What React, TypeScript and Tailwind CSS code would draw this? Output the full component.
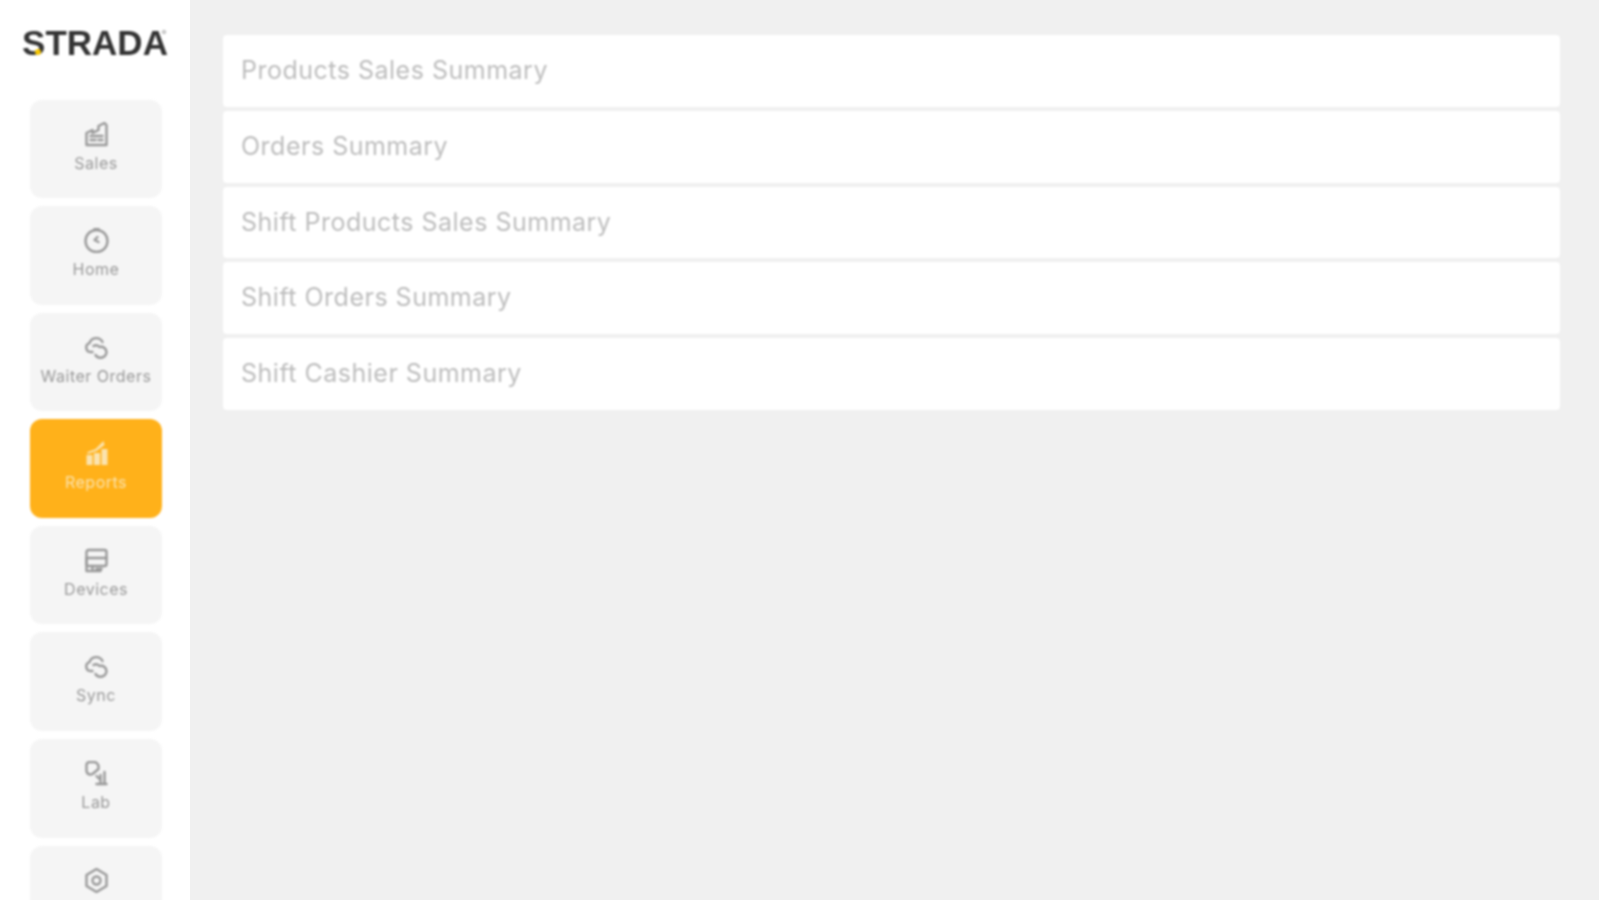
import { ReactNode } from 'react';

const stroke = {
  fill: 'none',
  stroke: 'currentColor',
  strokeWidth: 2.4,
  strokeLinecap: 'round' as const,
  strokeLinejoin: 'round' as const,
};

const icons: Record<string, ReactNode> = {
  sales: (
    <g {...stroke}>
      <path d="M2 23V11l6-3v3l6-3V4l6-3 2 2v20z" />
      <path d="M6 18h5M14 18h4M6 14h12" />
    </g>
  ),
  home: (
    <g {...stroke}>
      <circle cx="12" cy="13" r="11" />
      <path d="M13 9l-3 3 4 2" />
      <path d="M10 1h4" />
    </g>
  ),
  cloud: (
    <g {...stroke}>
      <path d="M8 17H6a4.5 4.5 0 0 1-1-8.8A7 7 0 0 1 18 7" />
      <path d="M9 11c3-2 5 0 6 1 4-1 7 2 7 5a6 6 0 0 1-11 3" />
    </g>
  ),
  reports: (
    <g fill="currentColor">
      <path d="M2 14h6v10H2zM9.5 12h6v12h-6zM17 8h6v16h-6z" />
      <path d="M3 11l8-3 8-8 1 4-8 6-9 3z" />
    </g>
  ),
  devices: (
    <g {...stroke}>
      <rect x="2" y="2" width="20" height="16" rx="2" />
      <path d="M2 10h20M2 10v13h6M8 18v5h8M12 21h5" />
    </g>
  ),
  lab: (
    <g {...stroke}>
      <path d="M2 4a3 3 0 0 1 3-3h4a5 5 0 0 1 5 5v2l-6 5a4 4 0 0 1-6-3z" />
      <path d="M12 15l3 3M16 14v9M20 11v12M12 23h10" />
    </g>
  ),
  settings: (
    <g {...stroke}>
      <path d="M12 1l10 6v11l-10 6-10-6V7z" />
      <circle cx="12" cy="12.5" r="4" />
    </g>
  ),
};

const navItems = [
  { label: 'Sales', icon: 'sales' },
  { label: 'Home', icon: 'home' },
  { label: 'Waiter Orders', icon: 'cloud' },
  { label: 'Reports', icon: 'reports', active: true },
  { label: 'Devices', icon: 'devices' },
  { label: 'Sync', icon: 'cloud' },
  { label: 'Lab', icon: 'lab' },
  { label: 'Settings', icon: 'settings' },
];

const reports = [
  'Products Sales Summary',
  'Orders Summary',
  'Shift Products Sales Summary',
  'Shift Orders Summary',
  'Shift Cashier Summary',
];

function NavTile({ label, icon, active }: { label: string; icon: string; active?: boolean }) {
  return (
    <div
      className={`flex h-[98.6px] shrink-0 flex-col items-center pt-[22px] rounded-xl ${
        active ? 'bg-[#ffb11a] text-[#fbe3ae]' : 'bg-[#f5f5f5] text-[#999999]'
      }`}
    >
      <svg viewBox="0 0 24 25" className="h-[25px] w-[25px]">
        {icons[icon]}
      </svg>
      <span className="mt-[6px] text-[16px] leading-[20px] tracking-[0.5px] whitespace-nowrap">{label}</span>
    </div>
  );
}

export default function App() {
  return (
    <div className="flex h-screen overflow-hidden bg-[#f0f0f0] font-['Inter',sans-serif]">
      <aside className="w-[190px] shrink-0 overflow-hidden bg-white">
        <div className="blur-[1px]">
          <div className="relative flex h-[99.5px] justify-center pt-[23px]">
            <span className="font-['Liberation_Sans',sans-serif] text-[35px] leading-[40px] font-bold text-[#333333]">
              STRADA
            </span>
            <span className="absolute top-[30px] left-[162px] h-[4px] w-[4px] rounded-full border border-[#999999]" />
            <span className="absolute top-[49px] left-[35px] h-[6px] w-[6px] rounded-full bg-[#f7c600]" />
          </div>
          <nav className="flex flex-col gap-2 pr-[28px] pl-[30px]">
            {navItems.map((item) => (
              <NavTile key={item.label} {...item} />
            ))}
          </nav>
        </div>
      </aside>
      <main className="flex-1 pt-[35px] pr-[39px] pl-[33px]">
        <div className="flex flex-col gap-1 blur-[1px]">
          {reports.map((name) => (
            <div key={name} className="flex h-[71.75px] items-center rounded-sm bg-white pl-[18px]">
              <span className="text-[25px] tracking-[0.5px] text-[#bdbdbd]">{name}</span>
            </div>
          ))}
        </div>
      </main>
    </div>
  );
}
